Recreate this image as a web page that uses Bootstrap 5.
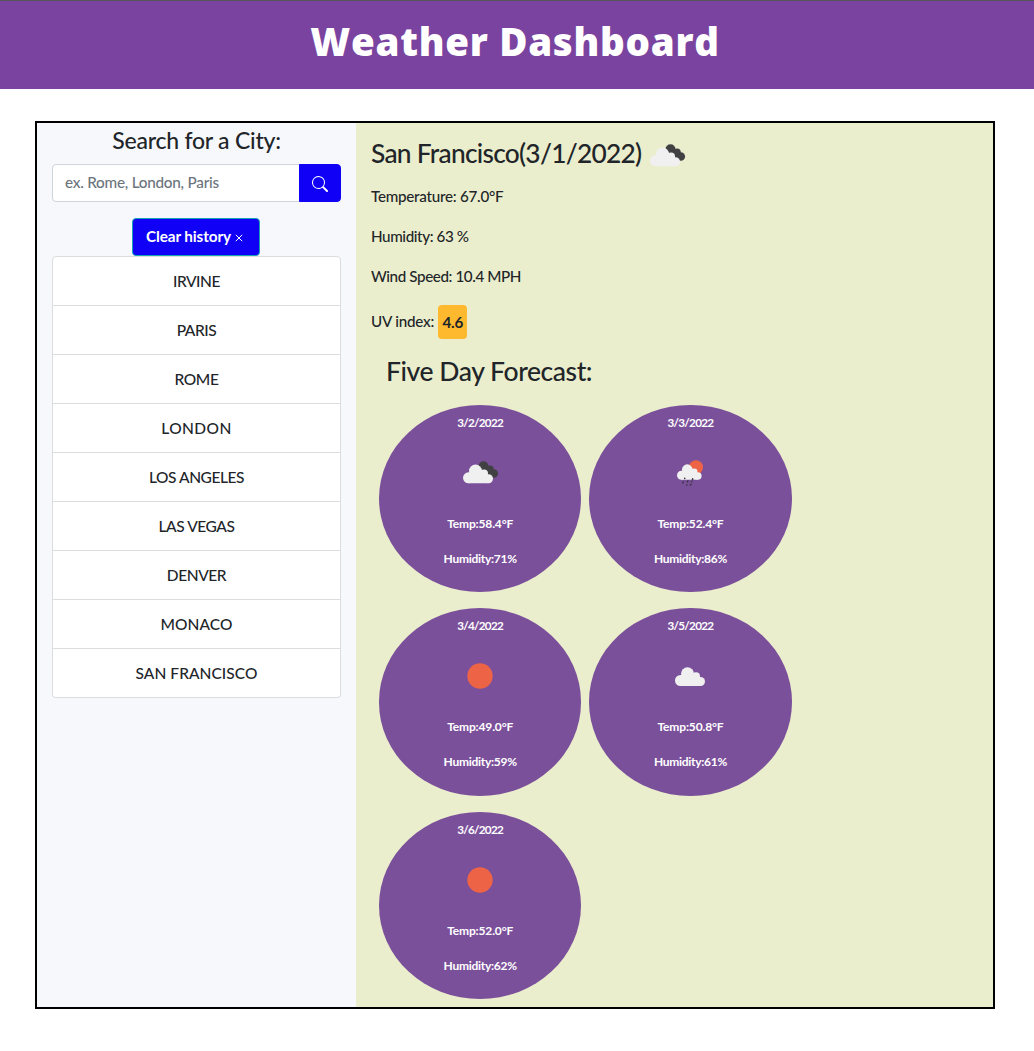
<!DOCTYPE html>
<html lang="en">
<head>
<meta charset="utf-8">
<meta name="viewport" content="width=device-width, initial-scale=1">
<title>Weather Dashboard</title>
<link href="https://cdn.jsdelivr.net/npm/bootstrap@5.3.0/dist/css/bootstrap.min.css" rel="stylesheet">
<style>
  body { font-family: Lato, "Open Sans", sans-serif; font-weight: 500; color: #212529; background: #fff; }
  .page-banner { height: 89px; background: #7a43a0; border-top: 1px solid #55555a; padding: 17px 4px 0 0; }
  .page-banner h1 { font-family: "Open Sans", sans-serif; font-weight: 800; font-size: 38.5px; line-height: 46px; letter-spacing: .72px; }
  .dashboard { margin: 32px 39px 0 35px; height: 888px; border: 2px solid #000; }
  .side-panel { width: 319px; padding: 0 15px; background: #f7f8fb; }
  .side-panel h2 { font-size: 23px; line-height: 29px; margin: 3px 0 9px; font-weight: 500; letter-spacing: -.23px; }
  .side-panel .form-control { height: 38px; font-size: 15.3px; letter-spacing: -.25px; font-weight: 500; border-color: #ced4da; border-radius: 4px; padding: 5px 12px 7px; }
  .side-panel .form-control::placeholder { color: #6c757d; }
  .btn-blue, .btn-blue:hover { background: #1000f5; border: 1px solid #1000f5; color: #fff; border-radius: 4px; font-weight: 700; }
  .btn-find { width: 42px; padding: 0 0 2px; }
  .btn-clear, .btn-clear:hover { width: 128px; height: 38px; padding: 0 3px 2px 0; border-color: #17a2b8; font-size: 15.3px; letter-spacing: -.1px; }
  .clear-row { padding-right: 1px; }
  .history { --bs-list-group-border-radius: 4px; letter-spacing: -.42px; font-size: 15.5px; }
  .history .list-group-item { height: 49px; padding: 12px 0 0; line-height: 24px; border-color: #dcdddf; color: #212529; }
  .history .list-group-item:first-child { height: 50px; }
  .history .wide-name { letter-spacing: .04px; }
  .history .wider-name { letter-spacing: .45px; }
  .main-panel { background: #ebeecd; padding: 0 15px; }
  .city-name { font-size: 26.3px; line-height: 34px; font-weight: 500; margin: 0; padding-top: 13px; height: 61px; letter-spacing: -.72px; }
  .city-name svg { margin: -5px 0 0 1px; vertical-align: top; }
  .stat { height: 24px; font-size: 15.2px; line-height: 24px; margin: 0 0 16px; letter-spacing: -.4px; }
  .temp-now { letter-spacing: -.25px; }
  .uv-row { height: 34px; line-height: 33px; margin: 17px 0 0; letter-spacing: -.2px; }
  .uv-chip { background: #ffb92e; border-radius: 4px; width: 29px; margin-left: 4px; line-height: 34px; font-weight: 700; }
  .forecast-title { font-size: 26.5px; line-height: 34px; font-weight: 500; margin: 15px 0 17px 15px; letter-spacing: -.43px; }
  .day-grid { width: 430px; padding-left: 8px; column-gap: 8px; row-gap: 16px; }
  .day-disc { width: 202.3px; height: 187.3px; border-radius: 50%; background: #7b509b; color: #fff; font-size: 12px; font-weight: 700; letter-spacing: -.28px; padding-top: 8px; }
  .day-disc p { margin: 0; line-height: 18px; }
  .day-disc .day-date { font-size: 11.7px; letter-spacing: -.72px; }
  .day-disc svg { display: block; margin: 17px auto; }
  .day-disc .day-temp { margin-bottom: 17px; letter-spacing: -.15px; }
</style>
</head>
<body>
<svg class="d-none">
  <symbol id="cloud" viewBox="0 0 50 50">
    <g fill="#f0f0f0"><circle cx="15.500" cy="29.500" r="5.500"/><circle cx="22.500" cy="22.800" r="6.500"/><circle cx="31" cy="25.300" r="4"/><circle cx="35.500" cy="30.500" r="4.500"/><path d="M15.500 24.500L29 22.500 33 28 35.500 35h-20Z"/></g>
  </symbol>
  <symbol id="broken" viewBox="0 0 50 50">
    <g fill="#414144"><circle cx="28.500" cy="18.300" r="5"/><circle cx="35" cy="21.300" r="3.800"/><circle cx="38.800" cy="25.500" r="4.300"/><path d="M28 22L35 18 40 29 34 28Z"/></g>
    <use href="#cloud" x="-2" y="0.300" width="50" height="50"/>
  </symbol>
  <symbol id="sunrain" viewBox="0 0 50 50">
    <circle cx="31" cy="19.300" r="7" fill="#ec6346"/>
    <use href="#cloud" x="3.800" y="3" width="41" height="41"/>
    <path stroke="#3f3a4a" stroke-width="1.600" stroke-linecap="round" d="M19.700 30.200v.3M27.600 30.900v.8M18.400 33.900l-.5 1M22.900 32.800l-.5 1.200M26.700 33.500v.2M21.900 36.900v.2M25.900 36.200l-.4.900"/>
  </symbol>
  <symbol id="sun" viewBox="0 0 50 50"><circle cx="25" cy="25" r="12.700" fill="#ec6346"/></symbol>
</svg>

<header class="page-banner text-center text-white"><h1 class="m-0">Weather Dashboard</h1></header>

<main class="dashboard d-flex">
  <section class="side-panel text-center flex-shrink-0">
    <h2>Search for a City:</h2>
    <div class="input-group mb-3">
      <input type="text" class="form-control" placeholder="ex. Rome, London, Paris" aria-label="City">
      <button class="btn btn-blue btn-find" type="button" aria-label="Search">
        <svg width="16" height="16" viewBox="0 0 16 16" fill="#fff"><path d="M11.742 10.344a6.500 6.500 0 1 0-1.397 1.398h-.001c.03.04.062.078.098.115l3.850 3.850a1 1 0 0 0 1.415-1.414l-3.850-3.850a1.007 1.007 0 0 0-.115-.1zM12 6.500a5.500 5.500 0 1 1-11 0 5.500 5.500 0 0 1 11 0z"/></svg>
      </button>
    </div>
    <div class="clear-row d-flex justify-content-center">
      <button class="btn btn-blue btn-clear d-flex align-items-center justify-content-center" type="button">Clear history
        <svg class="ms-1 mt-1" width="8" height="8" viewBox="0 0 8 8" stroke="#fff" stroke-width="1"><path d="M.8.8l6.400 6.400M7.200.8L.8 7.200"/></svg>
      </button>
    </div>
    <ul class="list-group history">
      <li class="list-group-item">IRVINE</li>
      <li class="list-group-item">PARIS</li>
      <li class="list-group-item">ROME</li>
      <li class="list-group-item wider-name">LONDON</li>
      <li class="list-group-item">LOS ANGELES</li>
      <li class="list-group-item">LAS VEGAS</li>
      <li class="list-group-item">DENVER</li>
      <li class="list-group-item wide-name">MONACO</li>
      <li class="list-group-item wide-name">SAN FRANCISCO</li>
    </ul>
  </section>

  <section class="main-panel flex-grow-1">
    <h2 class="city-name">San Francisco(3/1/2022)<svg width="50" height="50"><use href="#broken"/></svg></h2>
    <p class="stat temp-now">Temperature: 67.0°F</p>
    <p class="stat">Humidity: 63 %</p>
    <p class="stat">Wind Speed: 10.4 MPH</p>
    <p class="stat uv-row d-flex">UV index: <span class="uv-chip text-center">4.6</span></p>
    <h2 class="forecast-title">Five Day Forecast:</h2>
    <div class="day-grid d-flex flex-wrap">
      <div class="day-disc text-center">
        <p class="day-date">3/2/2022</p><svg width="50" height="50"><use href="#broken"/></svg>
        <p class="day-temp">Temp:58.4°F</p><p>Humidity:71%</p>
      </div>
      <div class="day-disc text-center">
        <p class="day-date">3/3/2022</p><svg width="50" height="50"><use href="#sunrain"/></svg>
        <p class="day-temp">Temp:52.4°F</p><p>Humidity:86%</p>
      </div>
      <div class="day-disc text-center">
        <p class="day-date">3/4/2022</p><svg width="50" height="50"><use href="#sun"/></svg>
        <p class="day-temp">Temp:49.0°F</p><p>Humidity:59%</p>
      </div>
      <div class="day-disc text-center">
        <p class="day-date">3/5/2022</p><svg width="50" height="50"><use href="#cloud"/></svg>
        <p class="day-temp">Temp:50.8°F</p><p>Humidity:61%</p>
      </div>
      <div class="day-disc text-center">
        <p class="day-date">3/6/2022</p><svg width="50" height="50"><use href="#sun"/></svg>
        <p class="day-temp">Temp:52.0°F</p><p>Humidity:62%</p>
      </div>
    </div>
  </section>
</main>
<script src="https://cdn.jsdelivr.net/npm/bootstrap@5.3.0/dist/js/bootstrap.bundle.min.js"></script>
</body>
</html>
